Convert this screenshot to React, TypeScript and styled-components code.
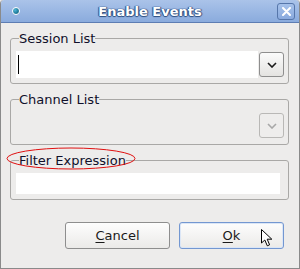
import * as React from "react";
import styled, { createGlobalStyle } from "styled-components";

const GlobalStyle = createGlobalStyle`
  html, body {
    margin: 0;
    padding: 0;
    background: #edeceb;
  }
  body {
    font-family: "DejaVu Sans", "Noto Sans", sans-serif;
  }
`;

const Window = styled.div`
  position: relative;
  width: 300px;
  height: 269px;
  box-sizing: border-box;
  border: 1px solid #8a8a8a;
  border-top: none;
  border-radius: 4px 4px 0 0;
  background: #edeceb;
  display: flex;
  flex-direction: column;
  overflow: hidden;
`;

const TitleBar = styled.div`
  height: 22px;
  flex: none;
  margin: 0 -1px;
  display: grid;
  grid-template-columns: 30px 1fr 30px;
  align-items: center;
  background: linear-gradient(#aac3e9, #8aabdd);
  border-bottom: 1px solid #5d7db3;
  border-radius: 4px 4px 0 0;
`;

const WindowIcon = styled.div`
  width: 6px;
  height: 6px;
  margin-left: 12px;
  border-radius: 50%;
  border: 1px solid #ffffff;
  background: radial-gradient(circle at 35% 35%, #4fb8d8, #187292 65%, #124a60);
`;

const Title = styled.div`
  text-align: center;
  color: #ffffff;
  font-weight: bold;
  font-size: 13px;
  text-shadow: 0 0 1px #2f4f80, 1px 0 1px #2f4f80, -1px 0 1px #2f4f80, 0 1px 1px #2f4f80;
`;

const CloseButton = styled.div`
  justify-self: end;
  margin-right: 5px;
  width: 16px;
  height: 15px;
  border: 1px solid #5676aa;
  border-radius: 3px;
  background: linear-gradient(#a6c1ea, #89aade);
  display: flex;
  align-items: center;
  justify-content: center;
`;

const Body = styled.div`
  flex: 1;
  display: flex;
  flex-direction: column;
  gap: 8px;
  padding: 8px 10px 0 9px;
`;

const Group = styled.fieldset<{ $height: number }>`
  margin: 0;
  height: ${(p) => p.$height}px;
  box-sizing: border-box;
  border: 1px solid #a9a8a6;
  border-radius: 3px;
  padding: 5px 4px 5px 5px;
  min-width: 0;
`;

const Legend = styled.legend`
  margin-left: 3px;
  padding: 0;
  height: 15px;
  line-height: 15px;
  font-size: 13px;
  color: #10102a;
`;

const Combo = styled.div`
  display: flex;
  align-items: center;
  height: 27px;
`;

const ComboField = styled.div<{ $enabled: boolean }>`
  flex: 1;
  height: 27px;
  background: ${(p) => (p.$enabled ? "#ffffff" : "transparent")};
  display: flex;
  align-items: center;
  padding-left: 2px;
`;

const Caret = styled.div`
  width: 1px;
  height: 19px;
  background: #000000;
`;

const ComboButton = styled.div<{ $enabled: boolean }>`
  width: 23px;
  height: 23px;
  margin-left: 1px;
  border: 1px solid ${(p) => (p.$enabled ? "#8e8e8e" : "#b9b8b6")};
  border-radius: 3px;
  background: ${(p) => (p.$enabled ? "linear-gradient(#fbfbfb, #e4e3e1)" : "#eeedec")};
  display: flex;
  align-items: center;
  justify-content: center;
`;

const TextInput = styled.div`
  height: 21px;
  margin-right: 4px;
  background: #ffffff;
`;

const ButtonRow = styled.div`
  display: flex;
  justify-content: flex-end;
  gap: 9px;
  margin-top: 14px;
  margin-right: 5px;
`;

const PushButton = styled.div<{ $default?: boolean }>`
  width: 105px;
  height: 27px;
  box-sizing: border-box;
  border: 1px solid ${(p) => (p.$default ? "#7397d1" : "#8e8e8e")};
  border-radius: 3px;
  background: linear-gradient(#fdfdfd, #ebeae8);
  box-shadow: ${(p) => (p.$default ? "inset 0 0 0 1px #dbe6f6" : "none")};
  display: flex;
  align-items: center;
  justify-content: center;
  font-size: 13px;
  color: #1a1a1a;
`;

const Mnemonic = styled.span`
  text-decoration: underline;
  text-underline-offset: 2px;
`;

const Highlight = styled.svg`
  position: absolute;
  left: 4px;
  top: 146px;
  pointer-events: none;
`;

const Pointer = styled.svg`
  position: absolute;
  left: 259px;
  top: 228px;
  pointer-events: none;
`;

function Chevron({ color }: { color: string }) {
  return (
    <svg width="10" height="6" viewBox="0 0 10 6">
      <path d="M1 1 L5 5 L9 1" fill="none" stroke={color} strokeWidth="1.6" />
    </svg>
  );
}

export default function App() {
  return (
    <>
      <GlobalStyle />
      <Window>
        <TitleBar>
          <WindowIcon />
          <Title>Enable Events</Title>
          <CloseButton>
            <svg width="9" height="9" viewBox="0 0 9 9">
              <path d="M1 1 L8 8 M8 1 L1 8" stroke="#ffffff" strokeWidth="2" strokeLinecap="round" />
            </svg>
          </CloseButton>
        </TitleBar>
        <Body>
          <Group $height={53}>
            <Legend>Session List</Legend>
            <Combo>
              <ComboField $enabled>
                <Caret />
              </ComboField>
              <ComboButton $enabled>
                <Chevron color="#1a1a1a" />
              </ComboButton>
            </Combo>
          </Group>
          <Group $height={53}>
            <Legend>Channel List</Legend>
            <Combo>
              <ComboField $enabled={false} />
              <ComboButton $enabled={false}>
                <Chevron color="#a8a8a8" />
              </ComboButton>
            </Combo>
          </Group>
          <Group $height={47}>
            <Legend>Filter Expression</Legend>
            <TextInput />
          </Group>
          <ButtonRow>
            <PushButton>
              <span>
                <Mnemonic>C</Mnemonic>ancel
              </span>
            </PushButton>
            <PushButton $default>
              <span>
                <Mnemonic>O</Mnemonic>k
              </span>
            </PushButton>
          </ButtonRow>
        </Body>
        <Highlight width="132" height="26" viewBox="0 0 132 26">
          <ellipse cx="66" cy="12.5" rx="64" ry="10.5" fill="none" stroke="#e01010" strokeWidth="1" />
        </Highlight>
        <Pointer width="14" height="20" viewBox="0 0 14 20">
          <path
            d="M1.5 1.5 L1.5 15 L4.8 12 L7.3 17.8 L9.6 16.8 L7.2 11.2 L11.8 11.2 Z"
            fill="#ffffff"
            stroke="#000000"
            strokeWidth="1"
            strokeLinejoin="round"
          />
        </Pointer>
      </Window>
    </>
  );
}
